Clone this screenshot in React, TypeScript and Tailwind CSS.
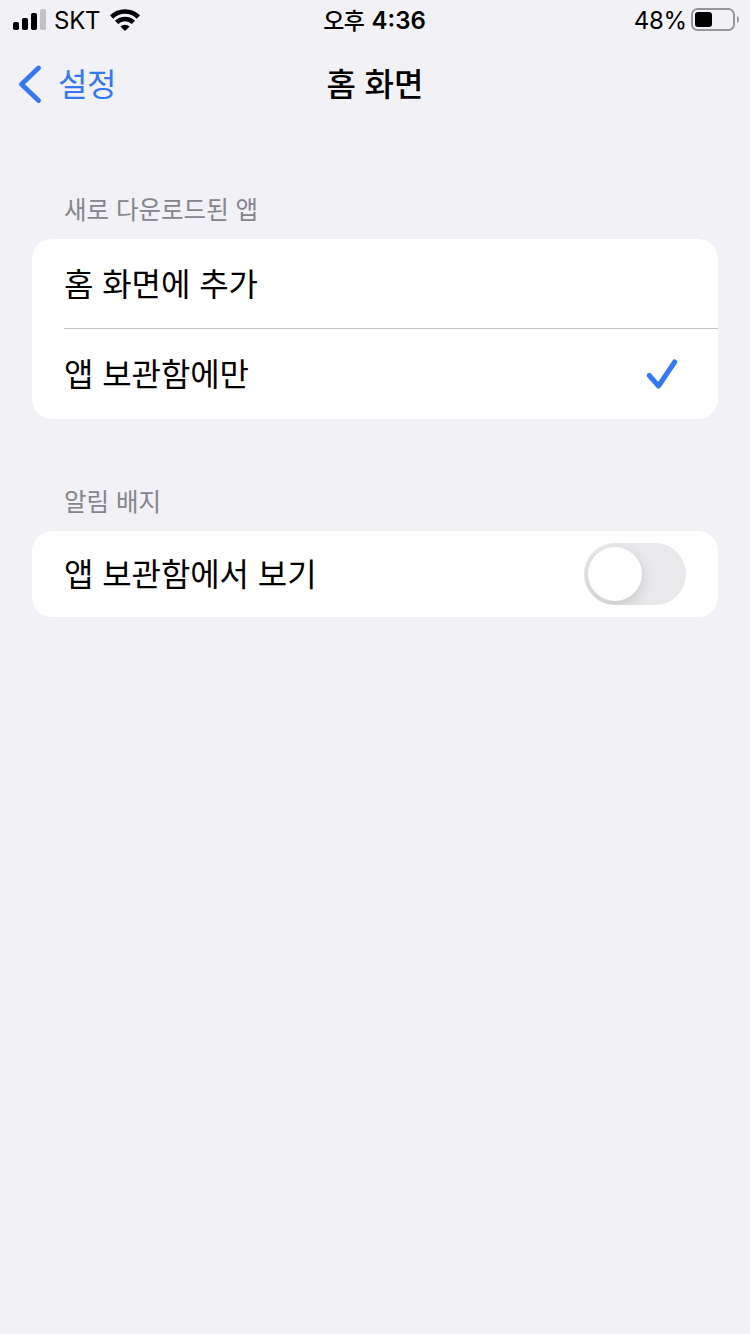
import { useState } from "react";
import type { ReactNode } from "react";

function StatusBar() {
  return (
    <div className="grid grid-cols-3 h-10 pl-[13px] pr-[9px] text-[24px] leading-none">
      <div className="flex items-center">
        <svg width="34" height="22" viewBox="0 0 34 22">
          <rect x="0" y="13" width="6" height="8" rx="1.8" />
          <rect x="9" y="9" width="6" height="12" rx="1.8" />
          <rect x="18" y="4" width="6" height="17" rx="1.8" />
          <rect x="27" y="0" width="6" height="21" rx="1.8" fill="#c3c3c7" />
        </svg>
        <span className="ml-[7px] pt-[2px] tracking-[-0.2px]">SKT</span>
        <svg
          width="32"
          height="24"
          viewBox="0 0 32 24"
          fill="none"
          stroke="black"
          strokeWidth="4.6"
          className="ml-[9px]"
        >
          <path d="M2.6 9a19 19 0 0 1 26.8 0" />
          <path d="M7.6 14.4a11.9 11.9 0 0 1 16.8 0" />
          <path d="M11.4 18.6a6.4 6.4 0 0 1 9.2 0L16 23Z" fill="black" stroke="none" />
        </svg>
      </div>
      <div className="flex items-center justify-center pr-[5px] pt-[2px]">
        <span className="text-[23px] tracking-[-0.5px] font-medium">오후</span>
        <span className="ml-[7px] font-semibold">4:36</span>
      </div>
      <div className="flex items-center justify-end">
        <span className="pt-[2px] tracking-[-0.2px]">48%</span>
        <svg width="50" height="24" viewBox="0 0 50 24" className="ml-[4px]">
          <rect x="1" y="1" width="42" height="21" rx="5.5" fill="none" stroke="#97979b" strokeWidth="2" />
          <rect x="4" y="4" width="17" height="15" rx="3" />
          <path d="M46 8c2.6 1 2.6 6 0 7Z" fill="#97979b" />
        </svg>
      </div>
    </div>
  );
}

function NavBar() {
  return (
    <header className="grid grid-cols-3 items-center h-[88px] px-[18px]">
      <button className="flex items-center text-[#3478f6] text-[32px] leading-none">
        <svg
          width="24"
          height="40"
          viewBox="0 0 24 40"
          fill="none"
          stroke="currentColor"
          strokeWidth="4.8"
          strokeLinecap="round"
          strokeLinejoin="round"
        >
          <path d="M20.5 4 3.5 20.3 20.5 36.6" />
        </svg>
        <span className="ml-[16px] pt-[2px] tracking-[-0.4px]">설정</span>
      </button>
      <h1 className="pt-[2px] text-center text-[32px] leading-none font-medium">홈 화면</h1>
    </header>
  );
}

type SectionProps = {
  title: string;
  children: ReactNode;
};

function Section({ title, children }: SectionProps) {
  return (
    <section className="px-8">
      <h2 className="px-8 h-[48px] text-[24.5px] leading-[38px] text-[#85858b]">
        {title}
      </h2>
      <div className="bg-white rounded-[20px] overflow-hidden text-[32px] leading-none tracking-[-0.1px]">
        {children}
      </div>
    </section>
  );
}

function Check() {
  return (
    <svg
      width="32"
      height="32"
      viewBox="0 0 32 32"
      fill="none"
      stroke="#3478f6"
      strokeWidth="5"
      strokeLinecap="round"
      strokeLinejoin="round"
    >
      <path d="M3.3 17.5 12.5 28 28.7 4" />
    </svg>
  );
}

const options = ["홈 화면에 추가", "앱 보관함에만"];

export default function App() {
  const [selected, setSelected] = useState(1);
  const [showBadge, setShowBadge] = useState(false);

  return (
    <main className="w-[750px] h-[1334px] bg-[#f1f1f6] text-black font-['Inter','Noto_Sans_CJK_KR',sans-serif]">
      <StatusBar />
      <NavBar />

      <div className="flex flex-col gap-[64px] pt-[63px]">
        <Section title="새로 다운로드된 앱">
          {options.map((label, idx) => (
            <div key={label} className="pl-8 last:pb-px" onClick={() => setSelected(idx)}>
              {idx > 0 && <div className="h-px bg-[#c6c6c8]" />}
              <div className="flex items-center justify-between h-[89px] pr-10">
                <span className="pt-[3px]">{label}</span>
                {selected === idx && <Check />}
              </div>
            </div>
          ))}
        </Section>

        <Section title="알림 배지">
          <div className="flex items-center justify-between h-[86px] px-8">
            <span className="pt-[2px]">앱 보관함에서 보기</span>
            <button
              role="switch"
              aria-checked={showBadge}
              onClick={() => setShowBadge(!showBadge)}
              className={`flex items-center w-[102px] h-[62px] p-1 rounded-full overflow-hidden ${
                showBadge ? "justify-end bg-[#34c759]" : "bg-[#e9e9eb]"
              }`}
            >
              <span className="w-[54px] h-[54px] rounded-full bg-white shadow-[0_5px_14px_rgba(0,0,0,0.15)]" />
            </button>
          </div>
        </Section>
      </div>
    </main>
  );
}
